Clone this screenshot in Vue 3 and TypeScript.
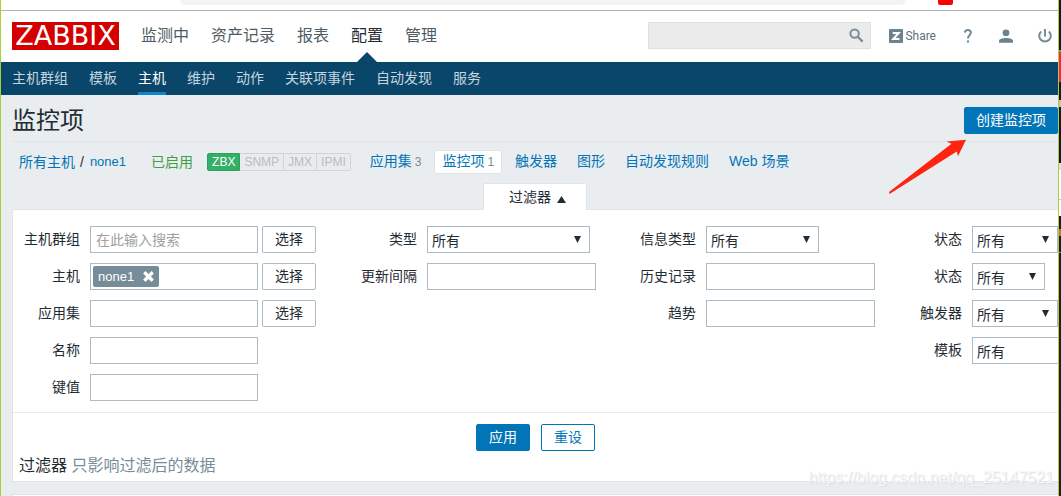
<script setup lang="ts">
import { ref } from 'vue'

interface Field {
  id: string
  label: string
  kind: 'text' | 'select' | 'multi'
  size?: string
  placeholder?: string
  tag?: string
  picker?: boolean
}

const menu = ['监测中', '资产记录', '报表', '配置', '管理']
const subMenu = ['主机群组', '模板', '主机', '维护', '动作', '关联项事件', '自动发现', '服务']
const interfaces = ['ZBX', 'SNMP', 'JMX', 'IPMI']
const tabs: { label: string; count?: number }[] = [
  { label: '应用集', count: 3 },
  { label: '监控项', count: 1 },
  { label: '触发器' },
  { label: '图形' },
  { label: '自动发现规则' },
  { label: 'Web 场景' },
]

const columns: Field[][] = [
  [
    { id: 'groups', label: '主机群组', kind: 'multi', placeholder: '在此输入搜索', picker: true },
    { id: 'hosts', label: '主机', kind: 'multi', tag: 'none1', picker: true },
    { id: 'application', label: '应用集', kind: 'text', picker: true },
    { id: 'name', label: '名称', kind: 'text' },
    { id: 'key', label: '键值', kind: 'text' },
  ],
  [
    { id: 'type', label: '类型', kind: 'select', size: 'xl' },
    { id: 'delay', label: '更新间隔', kind: 'text' },
  ],
  [
    { id: 'value-type', label: '信息类型', kind: 'select', size: 'lg' },
    { id: 'history', label: '历史记录', kind: 'text' },
    { id: 'trends', label: '趋势', kind: 'text' },
  ],
  [
    { id: 'state', label: '状态', kind: 'select', size: 'md' },
    { id: 'status', label: '状态', kind: 'select', size: 'sm' },
    { id: 'with-triggers', label: '触发器', kind: 'select', size: 'md' },
    { id: 'templated', label: '模板', kind: 'select', size: 'wide' },
  ],
]

const search = ref('')
</script>

<template>
  <div class="screen">
    <div class="window">
      <div class="browser">
        <span class="address"></span>
        <span class="badge"></span>
      </div>

      <header class="top">
        <a class="logo" href="#">ZABBIX</a>
        <nav class="menu">
          <a v-for="m in menu" :key="m" href="#" :class="{ active: m === '配置' }">{{ m }}</a>
        </nav>
        <div class="search">
          <input v-model="search" type="text" aria-label="搜索" />
          <button type="button" aria-label="搜索">
            <svg width="15" height="15" viewBox="0 0 15 15" fill="none" stroke="#768d99" stroke-width="2">
              <circle cx="5.6" cy="5.6" r="4.2" />
              <path d="M8.8 8.8 L13.6 13.6" stroke-width="2.3" />
            </svg>
          </button>
        </div>
        <a class="share" href="#">
          <span class="z">
            <svg width="14" height="14" viewBox="0 0 13 13">
              <rect width="13" height="13" rx="1" fill="#6c828e" />
              <path d="M3.5 3.7 H9 L4 9.3 H9.7" fill="none" stroke="#fff" stroke-width="1.9" />
            </svg>
          </span>
          Share
        </a>
        <a class="icon" href="#" aria-label="帮助">
          <svg width="16" height="16" viewBox="0 0 16 16" fill="none" stroke="#768d99" stroke-width="2">
            <path d="M4.9 4.6 C5 2.8 6.2 2 7.8 2 C9.6 2 10.9 3 10.9 4.6 C10.9 6.9 7.9 7.2 7.9 10.6" />
            <path d="M6.9 13.5 H9" stroke-width="2.2" />
          </svg>
        </a>
        <a class="icon user" href="#" aria-label="用户">
          <svg width="16" height="16" viewBox="0 0 16 16" fill="#6c828e">
            <circle cx="8" cy="4.8" r="3.4" />
            <path d="M1 14.8 V12.9 C1 10.7 5 9.9 8 9.9 C11 9.9 15 10.7 15 12.9 V14.8 Z" />
          </svg>
        </a>
        <a class="icon" href="#" aria-label="退出">
          <svg width="16" height="16" viewBox="0 0 16 16" fill="none" stroke="#768d99" stroke-width="2">
            <path d="M8 1 V8.4" />
            <path d="M4.2 3.4 A5.8 5.8 0 1 0 11.8 3.4" />
          </svg>
        </a>
      </header>

      <nav class="sub">
        <a v-for="s in subMenu" :key="s" href="#" :class="{ active: s === '主机' }">{{ s }}</a>
      </nav>

      <main class="content">
        <div class="title">
          <h1>监控项</h1>
          <button type="button" class="btn primary create">创建监控项</button>
          <svg class="pointer" width="80" height="56" viewBox="0 0 80 56">
            <path d="M2 53 L64.5 4.7 L59.5 2.5 L79 0.7 L71 17.3 L69.8 12.6 L2.5 55 Z" fill="#ff2312" />
          </svg>
        </div>

        <div class="crumbs">
          <a href="#">所有主机</a>
          <span class="slash">/</span>
          <a class="host" href="#">none1</a>
          <span class="enabled">已启用</span>
          <span class="ifaces">
            <span v-for="i in interfaces" :key="i" :class="{ on: i === 'ZBX' }">{{ i }}</span>
          </span>
          <span class="tabs">
            <a v-for="t in tabs" :key="t.label" href="#" :class="{ selected: t.label === '监控项' }"
              >{{ t.label }}<sup v-if="t.count">{{ t.count }}</sup></a
            >
          </span>
        </div>

        <div class="toggle-row">
          <button type="button" class="toggle">
            过滤器
            <svg width="9" height="7" viewBox="0 0 9 7"><path d="M4.5 0 L9 7 H0 Z" fill="#1f2c33" /></svg>
          </button>
        </div>

        <form class="panel" @submit.prevent>
          <div class="fields">
            <div v-for="(col, n) in columns" :key="n" class="col">
              <div v-for="f in col" :key="f.id" class="row">
                <label :for="f.id">{{ f.label }}</label>
                <div class="control">
                  <div v-if="f.kind === 'multi'" class="box multi">
                    <span v-if="f.tag" class="tag">
                      {{ f.tag }}
                      <button type="button" aria-label="移除">
                        <svg width="11" height="11" viewBox="0 0 11 11" stroke="#fff" stroke-width="3.4">
                          <path d="M1.3 1.3 L9.7 9.7 M9.7 1.3 L1.3 9.7" />
                        </svg>
                      </button>
                    </span>
                    <input :id="f.id" type="text" :placeholder="f.placeholder" />
                  </div>
                  <input v-else-if="f.kind === 'text'" :id="f.id" class="box" type="text" />
                  <div v-else class="select" :class="f.size">
                    <select :id="f.id">
                      <option>所有</option>
                    </select>
                    <svg width="9" height="7" viewBox="0 0 9 7"><path d="M1 0 H8 L4.5 7 Z" fill="#1f2c33" /></svg>
                  </div>
                  <button v-if="f.picker" type="button" class="btn pick">选择</button>
                </div>
              </div>
            </div>
          </div>
          <div class="actions">
            <button type="submit" class="btn primary">应用</button>
            <button type="reset" class="btn outline">重设</button>
          </div>
          <p class="note">过滤器 <span>只影响过滤后的数据</span></p>
        </form>

        <section class="next"></section>
      </main>
      <span class="watermark">https://blog.csdn.net/qq_25147521</span>
    </div>
    <div class="edge"></div>
  </div>
</template>

<style>
body {
  margin: 0;
}
</style>

<style scoped>
* {
  box-sizing: border-box;
}
.screen {
  display: flex;
  height: 100vh;
  overflow: hidden;
  font: 14px/20px 'Liberation Sans', 'Noto Sans CJK SC', sans-serif;
  color: #1f2c33;
}
a {
  color: #0275b8;
  text-decoration: none;
}
button,
input,
select {
  font: inherit;
  color: inherit;
  margin: 0;
}
.window {
  position: relative;
  flex: 1;
  min-width: 0;
  display: flex;
  flex-direction: column;
  overflow: hidden;
  background: #e9edf0;
  border-left: 1px solid #a8d03c;
  border-right: 1px solid #a8d03c;
}
.edge {
  width: 2px;
  background: linear-gradient(
    #14181f 0 50px,
    #8a8f94 50px 52px,
    #ff2346 52px 82px,
    #14181f 82px 100px,
    #c9c2b4 100px 107px,
    #14181f 107px 163px,
    #dde0e2 163px 170px,
    #fff 170px 199px,
    #c9cdd0 199px 200px,
    #fff 200px 216px,
    #1d1b1c 216px 229px,
    #b08245 229px 236px,
    #1d1b1c 236px 252px,
    #8a8f94 252px 253px,
    #241d18 253px
  );
}

.browser {
  display: flex;
  align-items: flex-start;
  height: 11px;
  padding: 0 105px 0 179px;
  background: #fff;
  border-bottom: 1px solid #b3b3b3;
}
.address {
  flex: 1;
  height: 5px;
  background: #f1f3f4;
  border-radius: 0 0 14px 14px;
}
.badge {
  width: 15px;
  height: 5px;
  margin-left: 32px;
  background: #f00;
  border-radius: 0 0 2px 2px;
}

.top {
  display: flex;
  align-items: center;
  height: 51px;
  padding: 0 5px 2px 11px;
  background: #fff;
}
.logo {
  width: 107px;
  height: 28px;
  background: #d40000;
  color: #fff;
  font: 27px/28px 'DejaVu Sans', sans-serif;
  text-align: center;
}
.menu {
  display: flex;
  align-self: flex-start;
  gap: 22px;
  margin-left: 22px;
  font-size: 16px;
}
.menu a {
  position: relative;
  height: 51px;
  line-height: 49px;
  color: #4f5c64;
}
.menu a.active {
  color: #1f2c33;
}
.menu a.active::after {
  content: '';
  position: absolute;
  bottom: 0;
  left: 50%;
  margin-left: -10px;
  border: 10px solid transparent;
  border-top-width: 0;
  border-bottom-color: #0a466a;
}
.search {
  display: flex;
  align-items: center;
  width: 223px;
  height: 27px;
  margin-left: auto;
  padding-right: 6px;
  background: #ebebeb;
  border: 1px solid #e0e0e0;
}
.search input {
  flex: 1;
  min-width: 0;
  border: 0;
  background: none;
}
.search button {
  display: flex;
  padding: 0;
  border: 0;
  background: none;
}
.share {
  display: flex;
  align-items: center;
  gap: 2px;
  margin: 0 24px 0 18px;
  font: 12px/20px Roboto, sans-serif;
  color: #5f6f79;
}
.z {
  display: flex;
}
.icon {
  display: flex;
}
.icon.user {
  margin: 0 23px 0 22px;
}

.sub {
  display: flex;
  gap: 21px;
  height: 33px;
  padding-left: 11px;
  background: #0a466a;
}
.sub a {
  line-height: 32px;
  color: #c5d5df;
}
.sub a.active {
  color: #fff;
  box-shadow: inset 0 -3px #0f85cb;
}

.content {
  flex: 1;
  display: flex;
  flex-direction: column;
  padding-left: 11px;
}
.title {
  position: relative;
  display: flex;
  align-items: center;
  justify-content: space-between;
  height: 47px;
  padding-top: 5px;
  border-bottom: 1px solid #dfe4e7;
}
h1 {
  margin: 0;
  font-size: 24px;
  font-weight: 400;
  line-height: 38px;
}
.pointer {
  position: absolute;
  top: 44px;
  right: 91px;
}
.btn {
  height: 27px;
  padding: 0 12px;
  border: 1px solid #0275b8;
  border-radius: 2px;
  line-height: 25px;
  white-space: nowrap;
}
.primary {
  background: #0275b8;
  color: #fff;
}
.outline {
  background: #fff;
  color: #0275b8;
}
.create {
  padding: 0 11px;
}

.crumbs {
  display: flex;
  align-items: center;
  height: 41px;
  padding: 0 0 2px 7px;
  white-space: nowrap;
}
.slash {
  margin: 0 6px 0 5px;
}
.host {
  font-size: 13px;
}
.enabled {
  margin-left: 25px;
  color: #429e47;
}
.ifaces {
  display: flex;
  height: 18px;
  margin-left: 14px;
  font-size: 12px;
  line-height: 17px;
  color: #b3bec5;
}
.ifaces span {
  padding: 0 4px;
  border: 1px solid #ccd5d9;
  border-left-width: 0;
  background: #ebebeb;
}
.ifaces .on {
  background: #34af67;
  border: 1px solid #2f9f5e;
  border-radius: 2px 0 0 2px;
  color: #fff;
}
.ifaces span:last-child {
  border-radius: 0 2px 2px 0;
}
.tabs {
  display: flex;
  gap: 6px;
  margin-left: 12px;
}
.tabs a {
  height: 24px;
  padding: 0 7px;
  line-height: 22px;
  border-radius: 2px;
}
.tabs .selected {
  background: #fff;
  border: 1px solid #dfe4e7;
  line-height: 20px;
}
.tabs sup {
  margin-left: 3px;
  font-size: 12px;
  line-height: 0;
  vertical-align: baseline;
  color: #768d99;
}

.toggle-row {
  display: flex;
  justify-content: center;
  position: relative;
  margin-bottom: -1px;
}
.toggle {
  display: flex;
  align-items: center;
  gap: 6px;
  height: 27px;
  padding: 0 20px 0 25px;
  background: #fff;
  border: 1px solid #dfe4e7;
  border-bottom: 0;
  border-radius: 2px 2px 0 0;
}
.toggle svg {
  margin-top: 4px;
}

.panel {
  background: #fff;
  border: 1px solid #dfe4e7;
  border-right: 0;
}
.fields {
  display: grid;
  grid-template-columns: 303fr 280fr 279fr 183fr;
  padding: 16px 0 11px;
}
.col {
  display: flex;
  flex-direction: column;
  gap: 10px;
}
.row {
  display: flex;
  align-items: center;
  gap: 10px;
}
.row label {
  flex: 1;
  padding-bottom: 2px;
  text-align: right;
  white-space: nowrap;
}
.control {
  display: flex;
  gap: 4px;
  width: 169px;
}
.col:first-child .control {
  width: 226px;
}
.col:last-child .control {
  width: 86px;
}
.box {
  width: 169px;
  height: 27px;
  padding: 0 5px;
  background: #fff;
  border: 1px solid #acbbc2;
}
.col:first-child .box {
  width: 168px;
}
.multi {
  display: flex;
  align-items: center;
  padding: 0 2px;
}
.multi > input {
  flex: 1;
  min-width: 0;
  width: 20px;
  padding: 0 3px;
  border: 0;
  background: none;
}
.multi > input::placeholder {
  color: #a0a0a0;
}
.tag {
  display: flex;
  align-items: center;
  gap: 9px;
  height: 21px;
  padding: 0 5px;
  background: #768d99;
  border-radius: 2px;
  color: #fff;
  font-size: 13px;
}
.tag button {
  display: flex;
  padding: 0;
  border: 0;
  background: none;
}
.pick {
  background: #fff;
  border-color: #acbbc2;
}
.select {
  position: relative;
  flex: none;
}
.select select {
  display: block;
  width: 100%;
  height: 27px;
  padding: 2px 4px 0;
  background: #fff;
  border: 1px solid #acbbc2;
  border-radius: 0;
  appearance: none;
}
.select svg {
  position: absolute;
  top: 10px;
  right: 8px;
  pointer-events: none;
}
.xl {
  width: 163px;
}
.lg {
  width: 113px;
}
.md {
  width: 86px;
}
.sm {
  width: 73px;
}
.wide {
  width: 120px;
}
.actions {
  display: flex;
  justify-content: center;
  gap: 11px;
  padding-top: 11px;
  border-top: 1px solid #ebebeb;
}
.note {
  margin: 0;
  padding: 3px 6px;
  font-size: 16px;
  line-height: 24px;
}
.note span {
  color: #768d99;
}
.next {
  flex: 1;
  margin-top: 12px;
  background: #fff;
  border: 1px solid #dfe4e7;
  border-width: 1px 0 0 1px;
}
.watermark {
  position: absolute;
  right: 4px;
  bottom: 8px;
  font-size: 16px;
  color: #f6f6f6;
  text-shadow: 1px 1px 1px #dcdcdc;
}
</style>
